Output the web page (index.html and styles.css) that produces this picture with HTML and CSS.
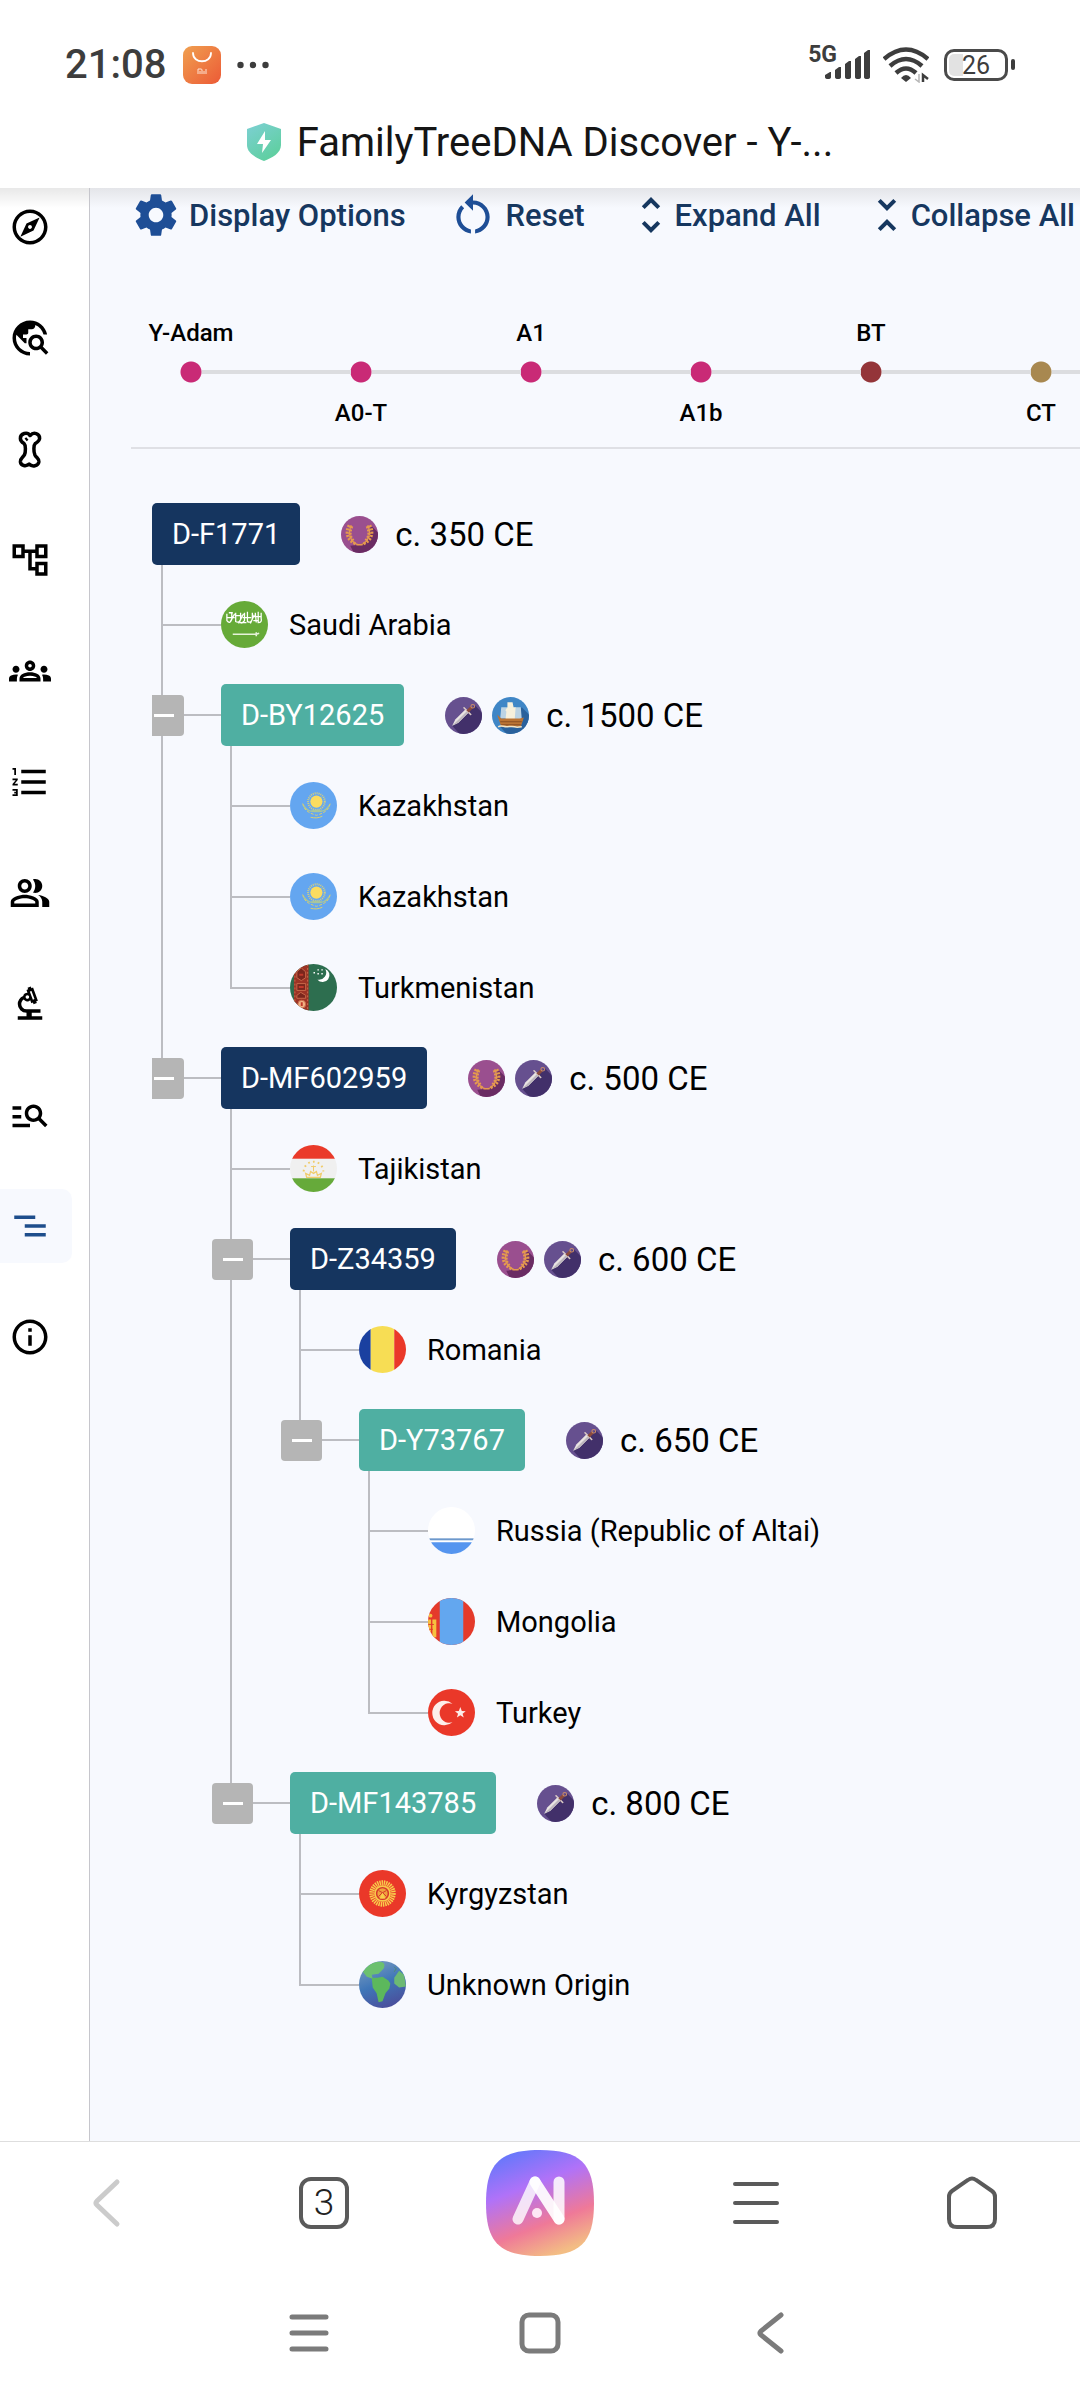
FILE: index.html
```
<!DOCTYPE html>
<html lang="en">
<head>
  <meta charset="UTF-8">
  <meta name="viewport" content="width=device-width, initial-scale=1.0">
  <title>FamilyTreeDNA Discover - Y-DNA</title>
  <link rel="stylesheet" href="styles.css">
</head>
<body>
  <!-- shared icons, flags and era badges -->
  <svg class="sprite" aria-hidden="true">
    <defs>
      <linearGradient id="shop-fill" x1="0" y1="0" x2="1" y2="1">
        <stop offset="0" stop-color="#f0a050"/>
        <stop offset="1" stop-color="#ec5a36"/>
      </linearGradient>
      <linearGradient id="shield-fill" x1="0" y1="0" x2="0.6" y2="1">
        <stop offset="0" stop-color="#7dd0d4"/>
        <stop offset="1" stop-color="#5fcfa0"/>
      </linearGradient>
      <linearGradient id="ai-fill" x1="0.2" y1="0" x2="0.6" y2="1">
        <stop offset="0" stop-color="#5f78fb"/>
        <stop offset="0.36" stop-color="#b072f8"/>
        <stop offset="0.72" stop-color="#ef7998"/>
        <stop offset="1" stop-color="#f3bd84"/>
      </linearGradient>
      <linearGradient id="globe-fill" x1="0.2" y1="0" x2="0.6" y2="1">
        <stop offset="0" stop-color="#7b9cc0"/>
        <stop offset="0.5" stop-color="#3f76b8"/>
        <stop offset="1" stop-color="#4a4f9c"/>
      </linearGradient>
      <clipPath id="disc"><circle cx="24" cy="24" r="24"/></clipPath>
      <clipPath id="badge-disc"><circle cx="18" cy="18" r="18"/></clipPath>

      <symbol id="laurel" viewBox="0 0 36 36">
        <g clip-path="url(#badge-disc)">
          <rect width="36" height="36" fill="#9a4f8f"/>
          <path d="M29 9l10 10v20H14l-5-10 9-1 8-4z" fill="#6a2c63"/>
          <g fill="none" stroke="#e59a4e" stroke-width="1.200">
            <path d="M17 28C10 26 6 18 10 9M19 28c7-2 11-10 7-19"/>
            <path d="M15 28h6" stroke-width="1.500"/>
          </g>
          <g fill="none" stroke="#e59a4e" stroke-width="3" stroke-dasharray="2 1.300">
            <path d="M14 27C7 24 3.500 17 8 9M12 24c-4-4-4-9-1-15"/>
            <path d="M22 27c7-3 10.500-10 6-18M24 24c4-4 4-9 1-15"/>
          </g>
        </g>
      </symbol>
      <symbol id="sword" viewBox="0 0 36 36">
        <g clip-path="url(#badge-disc)">
          <rect width="36" height="36" fill="#66508f"/>
          <path d="M29 8l10 10v20H16L7 28z" fill="#42306a"/>
          <path d="M7 28l3-6L20 12l3 3-10 10z" fill="#e9e4e2"/>
          <path d="M7 28L21.500 13.500l1.500 1.500-10 10z" fill="#bdb6bd"/>
          <path d="M18.500 10.500l6.500 6.500" stroke="#d9c9c4" stroke-width="1.600" stroke-linecap="round"/>
          <path d="M22 14l4-4" stroke="#8b4a3c" stroke-width="3"/>
          <circle cx="27" cy="9" r="1.800" fill="none" stroke="#c98c6a"/>
        </g>
      </symbol>
      <symbol id="ship" viewBox="0 0 36 36">
        <g clip-path="url(#badge-disc)">
          <rect width="36" height="36" fill="#3f86c6"/>
          <path d="M29 10l8 8v20H16L8 29z" fill="#2a619c"/>
          <path d="M9 10h6v11H8zM22 10h6l1 12h-8z" fill="#bcd3e4"/>
          <path d="M15 5h5l1 5h2l-1 13h-9l1-9-1-1 2-3z" fill="#f7f0dc"/>
          <path d="M5 17l4 4h18l4-1-3 9H9z" fill="#bb7434"/>
          <path d="M8 24h21M9 27h19" stroke="#8a4f25"/>
          <path d="M6 29c3-2 5 0 8 0s5-1 8 0 4 0 7 0" fill="none" stroke="#f3e6c8" stroke-width="1.500"/>
        </g>
      </symbol>

      <symbol id="flag-sa" viewBox="0 0 48 48">
        <circle cx="24" cy="24" r="24" fill="#66aa38"/>
        <g fill="none" stroke="#fff" stroke-width="1.300">
          <path d="M6 13v7q3 4 5-1v-7M9 22l5-9M15 12v9q3 2 5-2v-7M18 23l5-10M24 12v8q-3 4-5 1M27 11v10q4 2 5-3v-6M30 23l4-9M35 12l1 10M38 11v11q4 0 3-4V12"/>
          <path d="M6 17h8M14 15h7M22 17h9M32 16h9M8 12h4M20 22h6M33 20h5"/>
        </g>
        <path d="M12 34h24M36 32v4M36 34l3-1" stroke="#e6f3d9" stroke-width="1.600"/>
      </symbol>
      <symbol id="flag-kz" viewBox="0 0 48 48">
        <circle cx="24" cy="24" r="24" fill="#64a6f0"/>
        <circle cx="27" cy="20" r="6.200" fill="#fbdc60"/>
        <circle cx="27" cy="20" r="8.500" fill="none" stroke="#d5d080" stroke-width="2" stroke-dasharray="1 1"/>
        <path d="M13 22c1 7 7 9 14 9s13-2 14-9c-3 3-4 6-8 7-4-1-8-1-12 0-4-1-5-4-8-7z" fill="#a9c69a"/>
        <path d="M13 22c1 7 7 10 14 12 7-2 13-5 14-12" fill="none" stroke="#dccf6c" stroke-dasharray="3 1.500"/>
        <path d="M21 36c4 1 8 1 12-1" fill="none" stroke="#dccf6c"/>
      </symbol>
      <symbol id="flag-tm" viewBox="0 0 48 48">
        <g clip-path="url(#disc)">
          <rect width="48" height="48" fill="#2d6e4f"/>
          <rect x="4" width="15" height="48" fill="#9c3325"/>
          <path d="M5 0v48M18 0v48" stroke="#c9684a" stroke-dasharray="2 2"/>
          <g fill="#7a261d" stroke="#c9684a">
            <path d="M7 8l4.500-4L16 8v6l-4.500 3L7 14z"/>
            <path d="M7 20h9v7H7zM7 32l4-3 5 3v3H7z"/>
            <circle cx="12" cy="41" r="4" fill="#f0b183"/>
          </g>
          <path d="M9.500 11h4M9 23.500h5M12 39v4" stroke="#c0392b" stroke-width="2"/>
          <path d="M36 5a7 7 0 1 1-8 11 7.500 7.500 0 0 0 8-11z" fill="#fff"/>
          <path d="M24 9h1.500M28 6h1.500M28 10h1.500M32 6h1.500M32 10h1.500" stroke="#fff" stroke-width="1.500"/>
        </g>
      </symbol>
      <symbol id="flag-tj" viewBox="0 0 48 48">
        <g clip-path="url(#disc)">
          <rect width="48" height="48" fill="#f0f0f0"/>
          <rect width="48" height="14" fill="#ea3a2a"/>
          <rect y="34" width="48" height="14" fill="#66aa3a"/>
          <path d="M17 33h14l1-4-4 2-1-4-3 2-3-2-1 4-4-2z" fill="none" stroke="#f0cc6a" stroke-width="1.300"/>
          <path d="M24 27v-6M21.500 22h5" stroke="#f0cc6a"/>
          <path d="M14 27a10 10 0 1 1 20 0" fill="none" stroke="#f0cc6a" stroke-width="2" stroke-dasharray="1.800 3.200"/>
        </g>
      </symbol>
      <symbol id="flag-ro" viewBox="0 0 48 48">
        <g clip-path="url(#disc)">
          <rect width="12" height="48" fill="#1a40a0"/>
          <rect x="12" width="24" height="48" fill="#f7dd54"/>
          <rect x="36" width="12" height="48" fill="#ea3829"/>
        </g>
      </symbol>
      <symbol id="flag-altai" viewBox="0 0 48 48">
        <g clip-path="url(#disc)">
          <rect width="48" height="48" fill="#fff"/>
          <rect y="32" width="48" height="2" fill="#6d98cc"/>
          <rect y="36" width="48" height="12" fill="#5595ef"/>
        </g>
      </symbol>
      <symbol id="flag-mn" viewBox="0 0 48 48">
        <g clip-path="url(#disc)">
          <rect width="48" height="48" fill="#e43a2b"/>
          <rect x="12" width="24" height="48" fill="#63a7ef"/>
          <path d="M4.500 22h4v18h-4zM0 22h3v14H0z" fill="#f6c23f"/>
          <path d="M0 27h6M1 32h4" stroke="#e43a2b"/>
          <circle cx="2.500" cy="18" r="2" fill="#f6c23f"/>
        </g>
      </symbol>
      <symbol id="flag-tr" viewBox="0 0 48 48">
        <circle cx="24" cy="24" r="24" fill="#ea3829"/>
        <path d="M25 15a12.500 12.500 0 1 0 0 19 10 10 0 1 1 0-19z" fill="#fdeeea"/>
        <path d="M33 18.500l1.500 4 4 .2-3.200 2.500 1.200 4-3.500-2.400-3.500 2.400 1.200-4-3.200-2.500 4-.2z" fill="#fdeeea"/>
      </symbol>
      <symbol id="flag-kg" viewBox="0 0 48 48">
        <circle cx="24" cy="24" r="24" fill="#ea3829"/>
        <circle cx="24" cy="24" r="11" fill="none" stroke="#f8cf4c" stroke-width="5" stroke-dasharray="1.400 .8"/>
        <circle cx="24" cy="24" r="8.500" fill="#f8c94a"/>
        <circle cx="24" cy="24" r="6" fill="#f0a13c" stroke="#d5362a" stroke-width="1.500"/>
        <path d="M20 21q5 2 8 6M28 21q-5 2-8 6" fill="none" stroke="#d5362a"/>
        <path d="M24 23l3 6h-6z" fill="#f8cf4c"/>
      </symbol>
      <symbol id="globe" viewBox="0 0 48 48">
        <g clip-path="url(#disc)">
          <rect width="48" height="48" fill="url(#globe-fill)"/>
          <path d="M4 11c5-7 11-11 18-10 4 0 5 3 3 7l-5 5-7 1 1 4-6-2z" fill="#6cc06f"/>
          <path d="M13 17l6 0 5-1 6 4 2 3-1 5-4 5-3 8-4 1-2-9-4-6z" fill="#5cb85c"/>
          <path d="M36 17l5-7 5 4 2 12-7 1-5-4z" fill="#6cb974"/>
          <path d="M36 6l2 2-2 3" fill="none" stroke="#4c8a70"/>
        </g>
      </symbol>
    </defs>
  </svg>

  <div class="app">
    <header class="top">
      <div class="status-bar">
        <div class="status-left">
          <span class="clock">21:08</span>
          <svg class="shop-icon" viewBox="0 0 38 38" aria-hidden="true">
            <rect width="38" height="38" rx="9" fill="url(#shop-fill)"/>
            <path d="M10 7c0 11 18 11 18 0" fill="none" stroke="#fff" stroke-width="1.800" stroke-linecap="round"/>
            <path d="M15 28v-5h3q1 0 1 1v4M17 25v3M21 25v3M23 23v5" fill="none" stroke="#fde3d5"/>
          </svg>
          <svg class="dots-icon" viewBox="0 0 32 8" aria-hidden="true">
            <g fill="#3d3d3d"><circle cx="3.500" cy="4" r="3.200"/><circle cx="16" cy="4" r="3.200"/><circle cx="28.500" cy="4" r="3.200"/></g>
          </svg>
        </div>
        <div class="status-right">
          <span class="network">5G</span>
          <svg class="signal-icon" viewBox="0 0 46 30" aria-hidden="true">
            <g fill="#3d3d3d">
              <path d="M0 25l5-3h1v5q0 2-3 2t-3-2zM10 20l4-3h2v10q0 2-3 2t-3-2zM20 14l4-3h2v16q0 2-3 2t-3-2zM30 9l4-3h2v21q0 2-3 2t-3-2zM39 3l4-3h2v27q0 2-3 2t-3-2z"/>
            </g>
          </svg>
          <svg class="wifi-icon" viewBox="0 0 46 36" aria-hidden="true">
            <g fill="none" stroke="#3d3d3d" stroke-width="4.500">
              <path d="M1 12Q23-7 45 12M7 19q16-14 32 0M13 26q10-9 20 0"/>
            </g>
            <path d="M23 35l-5-4q5-6 10 0z" fill="#3d3d3d"/>
            <path d="M36 27v8l-4-3" fill="none" stroke="#b5b5b5" stroke-width="1.500"/>
            <path d="M40 35v-7l5 4" fill="none" stroke="#3d3d3d" stroke-width="2.500"/>
          </svg>
          <span class="battery"><span class="battery-level">26</span></span>
        </div>
      </div>
      <div class="title-bar">
        <svg class="shield-icon" viewBox="0 0 34 38" aria-hidden="true">
          <path d="M17 0l17 6v16c0 8-9 13-17 16C9 35 0 30 0 22V6z" fill="url(#shield-fill)"/>
          <path d="M18 8l-8 13h6l-1 9 9-13h-6z" fill="#fff"/>
        </svg>
        <span class="page-title">FamilyTreeDNA Discover - Y-...</span>
      </div>
    </header>

    <div class="body">
      <nav class="sidebar" aria-label="Reports">
        <a href="#" aria-label="Haplogroup story">
          <svg viewBox="0 0 24 24"><path d="M12 2C6.480 2 2 6.480 2 12s4.480 10 10 10 10-4.480 10-10S17.520 2 12 2zm0 18c-4.410 0-8-3.590-8-8s3.590-8 8-8 8 3.590 8 8-3.590 8-8 8zm-5.500-2.500l7.510-3.490L17.500 6.500 9.990 9.990 6.500 17.500zm5.500-6.600c.61 0 1.100.49 1.100 1.100s-.49 1.100-1.100 1.100-1.100-.49-1.100-1.100.49-1.100 1.100-1.100z"/></svg>
        </a>
        <a href="#" aria-label="Country frequency">
          <svg viewBox="0 0 24 24"><path d="M19.300 16.900c.4-.7.7-1.500.7-2.400 0-2.500-2-4.500-4.500-4.500S11 12 11 14.500s2 4.500 4.500 4.500c.9 0 1.700-.3 2.400-.7l3.200 3.200 1.400-1.400-3.200-3.200zm-3.800.1c-1.400 0-2.500-1.100-2.500-2.500s1.100-2.500 2.500-2.500 2.500 1.100 2.500 2.500-1.100 2.500-2.500 2.500zM12 20v2C6.480 22 2 17.520 2 12S6.480 2 12 2c4.840 0 8.870 3.440 9.800 8h-2.070c-.64-2.460-2.400-4.470-4.730-5.410V5c0 1.100-.9 2-2 2h-2v2c0 .55-.45 1-1 1H8v2h2v3H9l-4.790-4.790C4.080 10.790 4 11.380 4 12c0 4.410 3.590 8 8 8z"/></svg>
        </a>
        <a href="#" aria-label="Ancient connections">
          <svg viewBox="0 0 24 24"><path d="M12 4.300C10.600 2 6.400 3 6.500 6c0 1.500.9 2.200 2.100 2.900 1 1 1 4.600.2 6.500-.9 1.500-2.500 2-2.300 3.900.3 2.300 3.200 2.900 5 1.300 1.800 1.800 5.200 1.200 5.600-1.300.2-1.900-1.500-2.300-2.300-3.900-.8-2-.8-5.500.2-6.500 1.200-.8 2.400-1.400 2.500-2.900.1-2.800-3.500-4-5.300-1.700zM9.500 6.800l1-.8" fill="none" stroke="#000" stroke-width="2" stroke-linejoin="round"/></svg>
        </a>
        <a href="#" aria-label="Classic tree">
          <svg viewBox="0 0 24 24"><path d="M22 11V3h-7v3H9V3H2v8h7V8h2v10h4v3h7v-8h-7v3h-2V8h2v3h7zM7 9H4V5h3v4zm10 6h3v4h-3v-4zm0-10h3v4h-3V5z"/></svg>
        </a>
        <a href="#" aria-label="Group projects">
          <svg viewBox="0 0 24 24"><path d="M4 13c1.100 0 2-.9 2-2s-.9-2-2-2-2 .9-2 2 .9 2 2 2zm1.130 1.100c-.37-.06-.74-.1-1.130-.1-.99 0-1.930.21-2.780.58C.48 14.900 0 15.620 0 16.430V18h4.500v-1.610c0-.83.23-1.610.63-2.290zM20 13c1.100 0 2-.9 2-2s-.9-2-2-2-2 .9-2 2 .9 2 2 2zm4 3.430c0-.81-.48-1.530-1.220-1.850-.85-.37-1.790-.58-2.780-.58-.39 0-.76.04-1.130.1.4.68.63 1.460.63 2.290V18H24v-1.570zm-7.760-2.780c-1.170-.52-2.610-.9-4.240-.9-1.630 0-3.070.39-4.240.9C6.680 14.130 6 15.210 6 16.390V18h12v-1.610c0-1.180-.68-2.260-1.760-2.740zM8.070 16c.09-.23.13-.39.91-.69.97-.38 1.990-.56 3.020-.56s2.050.18 3.020.56c.77.3.81.46.91.69H8.070zM12 8c.55 0 1 .45 1 1s-.45 1-1 1-1-.45-1-1 .45-1 1-1m0-2c-1.660 0-3 1.340-3 3s1.340 3 3 3 3-1.340 3-3-1.340-3-3-3z"/></svg>
        </a>
        <a href="#" aria-label="Ancestral path">
          <svg viewBox="0 0 24 24"><path d="M2 17h2v.5H3v1h1v.5H2v1h3v-4H2v1zm1-9h1V4H2v1h1v3zm-1 3h1.800L2 13.100v.9h3v-1H3.200L5 10.900V10H2v1zm5-6v2h14V5H7zm0 14h14v-2H7v2zm0-6h14v-2H7v2z"/></svg>
        </a>
        <a href="#" aria-label="Notable connections">
          <svg viewBox="0 0 24 24"><path d="M16.670 13.130C18.040 14.060 19 15.320 19 17v3h4v-3c0-2.180-3.570-3.470-6.330-3.870zM15 12c2.210 0 4-1.790 4-4s-1.790-4-4-4c-.47 0-.91.1-1.330.24C14.500 5.270 15 6.580 15 8s-.5 2.730-1.330 3.760c.42.14.86.24 1.330.24zM9 12c2.210 0 4-1.790 4-4s-1.790-4-4-4-4 1.790-4 4 1.790 4 4 4zm0-6c1.100 0 2 .9 2 2s-.9 2-2 2-2-.9-2-2 .9-2 2-2zm0 7c-2.670 0-8 1.340-8 4v3h16v-3c0-2.660-5.330-4-8-4zm6 5H3v-.99C3.200 16.290 6.300 15 9 15s5.800 1.290 6 2v1z"/></svg>
        </a>
        <a href="#" aria-label="Scientific details">
          <svg viewBox="0 -960 960 960"><path d="M200-120v-80h200v-80q-83 0-141.500-58.500T200-480q0-61 33.500-111t90.500-73q8-34 35.500-55t62.500-21l-22-62 38-14-14-36 76-28 12 38 38-14 110 300-38 14 14 38-76 28-12-38-38 14-24-66q-15 14-34.500 21t-39.500 5q-22-2-41-13.500T338-582q-27 16-42.500 43T280-480q0 50 35 85t85 35h320v80H520v80h240v80H200Zm346-458 36-14-68-188-38 14 70 188Zm-126-22q17 0 28.500-11.500T460-640q0-17-11.500-28.500T420-680q-17 0-28.500 11.500T380-640q0 17 11.500 28.500T420-600Z"/></svg>
        </a>
        <a href="#" aria-label="Compare haplogroups">
          <svg viewBox="0 0 24 24"><path d="M7 9H2V7h5v2zm0 3H2v2h5v-2zm13.590 7l-3.830-3.830c-.8.52-1.740.83-2.760.83-2.760 0-5-2.240-5-5s2.240-5 5-5 5 2.240 5 5c0 1.020-.31 1.960-.83 2.750L22 17.590 20.590 19zM17 11c0-1.650-1.350-3-3-3s-3 1.350-3 3 1.350 3 3 3 3-1.350 3-3zM2 19h10v-2H2v2z"/></svg>
        </a>
        <a href="#" class="active" aria-label="Time tree" aria-current="page">
          <svg viewBox="0 0 24 24"><path d="M9 18h12v-2H9v2zM3 6v2h12V6H3zm6 7h12v-2H9v2z"/></svg>
        </a>
        <a href="#" aria-label="About">
          <svg viewBox="0 0 24 24"><path d="M11 7h2v2h-2zm0 4h2v6h-2zm1-9C6.480 2 2 6.480 2 12s4.480 10 10 10 10-4.480 10-10S17.520 2 12 2zm0 18c-4.410 0-8-3.590-8-8s3.590-8 8-8 8 3.590 8 8-3.590 8-8 8z"/></svg>
        </a>
      </nav>

      <main class="content">
        <div class="toolbar">
          <button type="button">
            <svg class="tool-icon" viewBox="0 0 24 24"><path d="M19.430 12.980c.04-.32.07-.64.07-.98s-.03-.66-.07-.98l2.110-1.650c.19-.15.24-.42.12-.64l-2-3.460c-.12-.22-.39-.3-.61-.22l-2.490 1c-.52-.4-1.080-.73-1.690-.98l-.38-2.650C14.460 2.180 14.250 2 14 2h-4c-.25 0-.46.18-.49.42l-.38 2.650c-.61.25-1.170.59-1.690.98l-2.490-1c-.23-.09-.49 0-.61.22l-2 3.460c-.13.22-.07.49.12.64l2.110 1.650c-.04.32-.07.65-.07.98s.03.66.07.98l-2.110 1.650c-.19.15-.24.42-.12.64l2 3.460c.12.22.39.3.61.22l2.490-1c.52.4 1.080.73 1.690.98l.38 2.650c.03.24.24.42.49.42h4c.25 0 .46-.18.49-.42l.38-2.650c.61-.25 1.170-.59 1.690-.98l2.490 1c.23.09.49 0 .61-.22l2-3.460c.12-.22.07-.49-.12-.64l-2.110-1.650zM12 15.500c-1.930 0-3.500-1.570-3.500-3.500s1.570-3.500 3.500-3.500 3.500 1.570 3.500 3.500-1.570 3.500-3.500 3.500z"/></svg>
            Display Options
          </button>
          <button type="button">
            <svg class="tool-icon" viewBox="0 0 24 24"><path d="M12 5V2L8 6l4 4V7c3.310 0 6 2.690 6 6 0 2.970-2.170 5.430-5 5.910v2.020c3.950-.49 7-3.850 7-7.930 0-4.420-3.580-8-8-8zm-6 8c0-1.650.67-3.150 1.760-4.240L6.340 7.340C4.900 8.790 4 10.790 4 13c0 4.080 3.050 7.440 7 7.930v-2.020c-2.830-.48-5-2.940-5-5.910z"/></svg>
            Reset
          </button>
          <button type="button">
            <svg class="fold-icon" viewBox="0 0 20 24"><path d="M12 5.830L15.170 9l1.410-1.410L12 3 7.410 7.590 8.830 9 12 5.830zm0 12.340L8.830 15l-1.420 1.410L12 21l4.590-4.590L15.170 15 12 18.170z"/></svg>
            Expand All
          </button>
          <button type="button">
            <svg class="fold-icon" viewBox="0 0 20 24"><path d="M7.410 18.590L8.830 20 12 16.830 15.170 20l1.410-1.410L12 14l-4.590 4.590zm9.180-13.180L15.170 4 12 7.170 8.830 4 7.410 5.410 12 10l4.590-4.590z"/></svg>
            Collapse All
          </button>
        </div>

        <ol class="timeline">
          <li class="stop magenta"><span class="name">Y-Adam</span><span class="dot"></span></li>
          <li class="stop magenta below"><span class="name">A0-T</span><span class="dot"></span></li>
          <li class="stop magenta"><span class="name">A1</span><span class="dot"></span></li>
          <li class="stop magenta below"><span class="name">A1b</span><span class="dot"></span></li>
          <li class="stop maroon"><span class="name">BT</span><span class="dot"></span></li>
          <li class="stop tan below"><span class="name">CT</span><span class="dot"></span></li>
        </ol>

        <ul class="tree">
          <li>
            <div class="row node">
              <a class="haplo" href="#">D-F1771</a>
              <span class="eras"><svg><use href="#laurel"/></svg></span>
              <span class="date">c. 350 CE</span>
            </div>
            <ul class="children">
              <li>
                <div class="row leaf"><span class="branch"></span><svg class="flag"><use href="#flag-sa"/></svg>Saudi Arabia</div>
              </li>
              <li>
                <div class="row node">
                  <span class="branch"><button type="button" class="toggle" aria-label="Collapse D-BY12625"></button></span>
                  <a class="haplo recent" href="#">D-BY12625</a>
                  <span class="eras"><svg><use href="#sword"/></svg><svg><use href="#ship"/></svg></span>
                  <span class="date">c. 1500 CE</span>
                </div>
                <ul class="children">
                  <li><div class="row leaf"><span class="branch"></span><svg class="flag"><use href="#flag-kz"/></svg>Kazakhstan</div></li>
                  <li><div class="row leaf"><span class="branch"></span><svg class="flag"><use href="#flag-kz"/></svg>Kazakhstan</div></li>
                  <li><div class="row leaf"><span class="branch"></span><svg class="flag"><use href="#flag-tm"/></svg>Turkmenistan</div></li>
                </ul>
              </li>
              <li>
                <div class="row node">
                  <span class="branch"><button type="button" class="toggle" aria-label="Collapse D-MF602959"></button></span>
                  <a class="haplo" href="#">D-MF602959</a>
                  <span class="eras"><svg><use href="#laurel"/></svg><svg><use href="#sword"/></svg></span>
                  <span class="date">c. 500 CE</span>
                </div>
                <ul class="children">
                  <li><div class="row leaf"><span class="branch"></span><svg class="flag"><use href="#flag-tj"/></svg>Tajikistan</div></li>
                  <li>
                    <div class="row node">
                      <span class="branch"><button type="button" class="toggle" aria-label="Collapse D-Z34359"></button></span>
                      <a class="haplo" href="#">D-Z34359</a>
                      <span class="eras"><svg><use href="#laurel"/></svg><svg><use href="#sword"/></svg></span>
                      <span class="date">c. 600 CE</span>
                    </div>
                    <ul class="children">
                      <li><div class="row leaf"><span class="branch"></span><svg class="flag"><use href="#flag-ro"/></svg>Romania</div></li>
                      <li>
                        <div class="row node">
                          <span class="branch"><button type="button" class="toggle" aria-label="Collapse D-Y73767"></button></span>
                          <a class="haplo recent" href="#">D-Y73767</a>
                          <span class="eras"><svg><use href="#sword"/></svg></span>
                          <span class="date">c. 650 CE</span>
                        </div>
                        <ul class="children">
                          <li><div class="row leaf"><span class="branch"></span><svg class="flag"><use href="#flag-altai"/></svg>Russia (Republic of Altai)</div></li>
                          <li><div class="row leaf"><span class="branch"></span><svg class="flag"><use href="#flag-mn"/></svg>Mongolia</div></li>
                          <li><div class="row leaf"><span class="branch"></span><svg class="flag"><use href="#flag-tr"/></svg>Turkey</div></li>
                        </ul>
                      </li>
                    </ul>
                  </li>
                  <li>
                    <div class="row node">
                      <span class="branch"><button type="button" class="toggle" aria-label="Collapse D-MF143785"></button></span>
                      <a class="haplo recent" href="#">D-MF143785</a>
                      <span class="eras"><svg><use href="#sword"/></svg></span>
                      <span class="date">c. 800 CE</span>
                    </div>
                    <ul class="children">
                      <li><div class="row leaf"><span class="branch"></span><svg class="flag"><use href="#flag-kg"/></svg>Kyrgyzstan</div></li>
                      <li><div class="row leaf"><span class="branch"></span><svg class="flag"><use href="#globe"/></svg>Unknown Origin</div></li>
                    </ul>
                  </li>
                </ul>
              </li>
            </ul>
          </li>
        </ul>
      </main>
    </div>

    <footer class="browser-bar">
      <button type="button" aria-label="Back" disabled>
        <svg width="54" height="54" viewBox="0 0 54 54"><path d="M36 6L16 25q-2 2 0 4l20 19" fill="none" stroke="#cbcbcb" stroke-width="5" stroke-linecap="round"/></svg>
      </button>
      <button type="button" aria-label="Tabs"><span class="tab-count">3</span></button>
      <button type="button" aria-label="Assistant">
        <svg width="108" height="106" viewBox="0 0 108 106">
          <path d="M54 0c40 0 54 13 54 53s-14 53-54 53S0 93 0 53 14 0 54 0z" fill="url(#ai-fill)"/>
          <g fill="none" stroke="#fff" stroke-width="11" stroke-linecap="round" stroke-linejoin="round">
            <path d="M32 69l17-37" opacity=".8"/>
            <path d="M73 32v37" opacity=".85"/>
            <path d="M49 32l24 37" opacity=".92"/>
          </g>
          <circle cx="51" cy="63" r="5" fill="#fde6f4"/>
        </svg>
      </button>
      <button type="button" aria-label="Menu">
        <svg width="54" height="54" viewBox="0 0 54 54"><path d="M6 8h42M6 27h42M6 46h42" stroke="#5a5a5a" stroke-width="4" stroke-linecap="round"/></svg>
      </button>
      <button type="button" aria-label="Home">
        <svg width="54" height="54" viewBox="0 0 54 54"><path d="M23 4q4-3 8 0l16 11q3 2 3 6v22q0 8-8 8H12q-8 0-8-8V21q0-4 3-6z" fill="none" stroke="#5a5a5a" stroke-width="4"/></svg>
      </button>
    </footer>

    <div class="system-nav">
      <button type="button" aria-label="Recent apps">
        <svg width="44" height="44" viewBox="0 0 44 44"><path d="M5 6h34M5 22h34M5 38h34" stroke="#7b7b7b" stroke-width="5" stroke-linecap="round"/></svg>
      </button>
      <button type="button" aria-label="Home screen">
        <svg width="44" height="44" viewBox="0 0 44 44"><rect x="4" y="4" width="36" height="36" rx="7" fill="none" stroke="#7b7b7b" stroke-width="5"/></svg>
      </button>
      <button type="button" aria-label="Go back">
        <svg width="44" height="44" viewBox="0 0 44 44"><path d="M32 4L12 20q-2 2 0 4l20 16" fill="none" stroke="#7b7b7b" stroke-width="5" stroke-linecap="round"/></svg>
      </button>
    </div>
  </div>
</body>
</html>
```

FILE: styles.css
```
* {
  margin: 0;
  padding: 0;
  box-sizing: border-box;
}

body {
  font-family: Roboto, 'Liberation Sans', sans-serif;
  background: #fff;
  color: #000;
}

button {
  font: inherit;
  color: inherit;
  background: none;
  border: none;
  cursor: pointer;
}

a {
  color: inherit;
  text-decoration: none;
}

ul,
ol {
  list-style: none;
}

svg {
  display: block;
  flex: none;
}

.sprite {
  position: absolute;
  width: 0;
  height: 0;
}

.app {
  display: flex;
  flex-direction: column;
  min-height: 100vh;
}

/* phone status bar and page title */
.status-bar {
  display: flex;
  justify-content: space-between;
  align-items: center;
  height: 96px;
  padding: 33px 65px 0;
  color: #3d3d3d;
}

.status-left,
.status-right {
  display: flex;
  align-items: center;
}

.clock {
  font-size: 40px;
  font-weight: 500;
  margin-right: 17px;
}

.shop-icon {
  width: 38px;
  height: 38px;
  margin-right: 16px;
}

.dots-icon {
  width: 32px;
  height: 8px;
}

.network {
  align-self: flex-start;
  font-size: 23px;
  line-height: 16px;
  font-weight: 700;
}

.signal-icon {
  width: 46px;
  height: 30px;
  margin: 0 12px 0 -12px;
}

.wifi-icon {
  width: 46px;
  height: 36px;
  margin-right: 15px;
}

.battery {
  display: flex;
  align-items: center;
}

.battery::after {
  content: '';
  width: 4px;
  height: 11px;
  margin-left: 3px;
  border-radius: 2px;
  background: #3d3d3d;
}

.battery-level {
  width: 64px;
  height: 32px;
  border: 3px solid #4a4a4a;
  border-radius: 10px;
  padding: 2px;
  background: linear-gradient(to right, #e2e2e2 14px, #fff 14px) content-box;
  text-align: center;
  font-size: 25px;
  line-height: 24px;
}

.title-bar {
  display: flex;
  justify-content: center;
  align-items: center;
  gap: 16px;
  height: 92px;
}

.shield-icon {
  width: 34px;
  height: 38px;
}

.page-title {
  font-size: 40px;
  color: #151515;
  white-space: nowrap;
}

/* page body */
.body {
  display: flex;
  flex: 1;
  background: linear-gradient(rgba(0, 0, 0, 0.09), rgba(0, 0, 0, 0) 20px);
}

.sidebar {
  display: flex;
  flex-direction: column;
  gap: 37px;
  width: 90px;
  flex: none;
  padding-top: 2px;
  border-right: 1px solid #c6c6cc;
}

.sidebar a {
  display: flex;
  align-items: center;
  width: 72px;
  height: 74px;
  padding-left: 9px;
  border-radius: 0 10px 10px 0;
}

.sidebar a.active {
  background: #f7f9fe;
  fill: #1e4e8c;
}

.sidebar svg {
  width: 42px;
  height: 42px;
}

.content {
  flex: 1;
  min-width: 0;
  overflow: hidden;
  padding: 2px 0 96px;
  background: linear-gradient(#e4e5e9, #f7f9fe 20px);
}

.toolbar {
  display: flex;
  gap: 42px;
  margin-left: 41px;
}

.toolbar button {
  display: flex;
  align-items: center;
  gap: 8px;
  height: 50px;
  font-size: 31px;
  font-weight: 500;
  color: #16375f;
  white-space: nowrap;
}

.tool-icon {
  width: 50px;
  height: 50px;
  fill: #1e4e96;
}

.fold-icon {
  width: 40px;
  height: 48px;
  fill: #16375f;
}

/* ancestral timeline */
.timeline {
  display: flex;
  margin: 72px 0 0 41px;
  padding-bottom: 15px;
  border-bottom: 2px solid #dfe0e5;
}

.stop {
  display: grid;
  grid-template-rows: 40px 40px 40px;
  flex: none;
  width: 170px;
  text-align: center;
  font-size: 24px;
  line-height: 43px;
  font-weight: 500;
}

.stop:first-child {
  margin-left: -25px;
}

.name {
  grid-row: 1;
}

.below .name {
  grid-row: 3;
}

/* the marker sits between the two line halves */
.dot {
  grid-row: 2;
  display: flex;
  align-items: center;
  gap: 21px;
  background: radial-gradient(circle, currentColor 10px, transparent 11px);
}

.dot::before,
.dot::after {
  content: '';
  flex: 1;
  height: 4px;
  background: #dcdde0;
}

.stop:first-child .dot::before {
  background: none;
}

.magenta .dot {
  color: #c92a76;
}

.maroon .dot {
  color: #943539;
}

.tan .dot {
  color: #a88850;
}

/* tree */
.tree {
  margin: 40px 0 0 62px;
  overflow: hidden;
}

.children {
  margin-left: 69px;
}

.tree > li > .children {
  margin-left: 9px;
}

.children > li {
  background: linear-gradient(#bcbdc2, #bcbdc2) no-repeat 0 0 / 2px 100%;
}

.children > li:last-child {
  background-size: 2px 46px;
}

.tree > li > .row {
  background: linear-gradient(#bcbdc2, #bcbdc2) no-repeat 9px 100% / 2px 20px;
}

.children .node {
  background: linear-gradient(#bcbdc2, #bcbdc2) no-repeat 69px 100% / 2px 20px;
}

.row {
  display: flex;
  align-items: center;
  white-space: nowrap;
}

.node {
  height: 90px;
}

.leaf {
  height: 91px;
  font-size: 29px;
}

.branch {
  display: flex;
  align-items: center;
  width: 60px;
  flex: none;
}

.branch::after {
  content: '';
  flex: 1;
  height: 2px;
  background: #bcbdc2;
}

.toggle {
  display: flex;
  align-items: center;
  justify-content: center;
  width: 41px;
  height: 41px;
  margin-left: -18px;
  border-radius: 4px;
  background: #b5b5b5;
}

.toggle::before {
  content: '';
  width: 20px;
  height: 3px;
  background: #fff;
}

.haplo {
  padding: 0 20px;
  border-radius: 5px;
  background: #15355f;
  color: #fff;
  font-size: 29px;
  line-height: 62px;
}

.haplo.recent {
  background: #4fafa2;
}

.eras {
  display: flex;
  gap: 10px;
  margin: 0 17px 0 41px;
}

.eras svg {
  width: 37px;
  height: 37px;
}

.date {
  font-size: 33px;
}

.flag {
  width: 47px;
  height: 47px;
  margin-right: 21px;
}

/* browser and system bars */
.browser-bar {
  display: grid;
  grid-template-columns: repeat(5, 1fr);
  align-items: center;
  height: 123px;
  border-top: 1px solid #dedede;
}

.browser-bar button,
.system-nav button {
  display: flex;
  justify-content: center;
  align-items: center;
}

.tab-count {
  width: 50px;
  height: 52px;
  border: 4px solid #5a5a5a;
  border-radius: 12px;
  font-size: 37px;
  font-weight: 300;
  line-height: 44px;
  color: #222;
}

.system-nav {
  display: flex;
  justify-content: center;
  gap: 187px;
  height: 136px;
  padding-top: 2px;
}
```
